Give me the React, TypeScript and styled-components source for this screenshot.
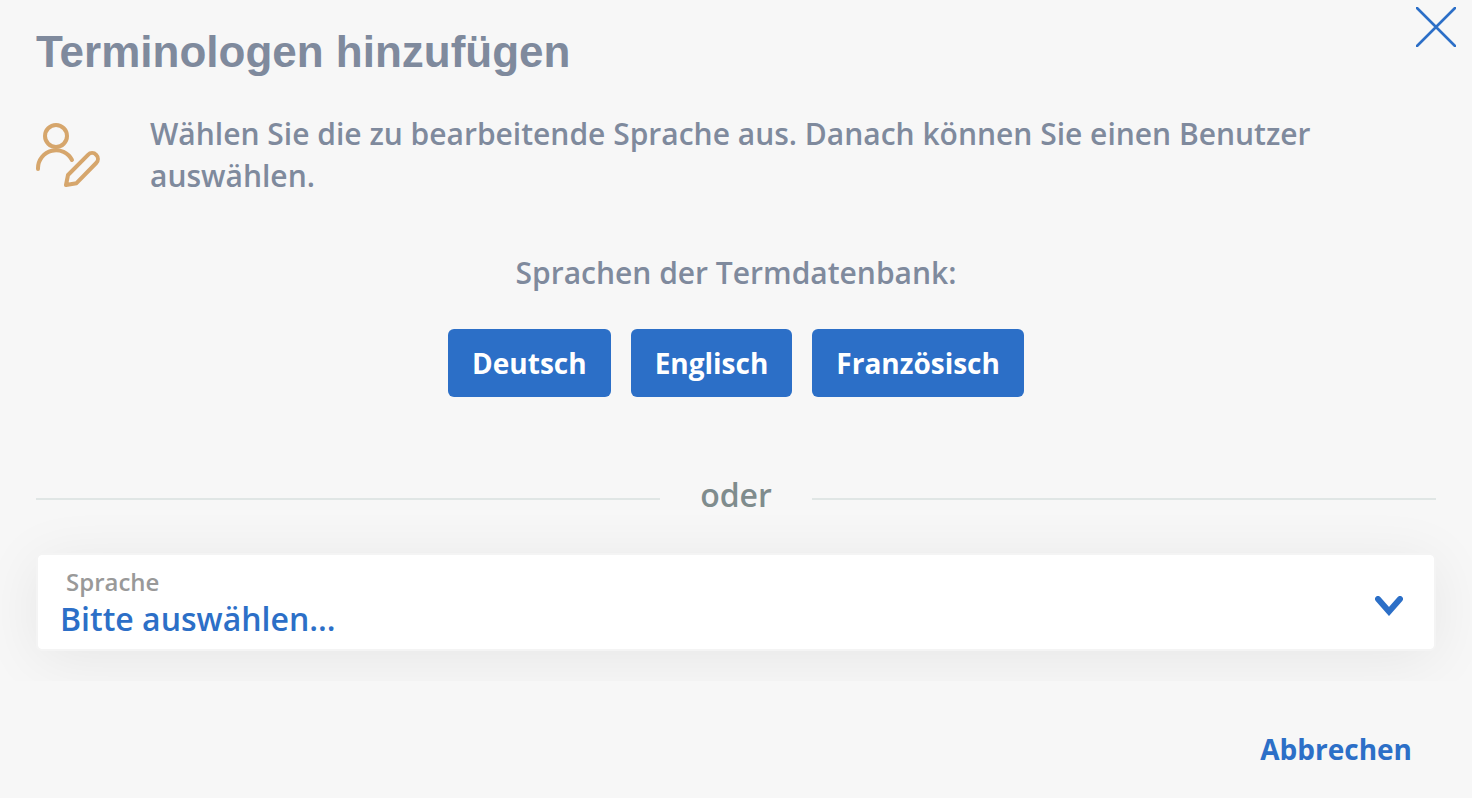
import React from "react";
import styled, { createGlobalStyle } from "styled-components";

const blue = "#2c6fc7";
const slate = "#7f8a9d";
const page = "#f7f7f7";

const GlobalStyle = createGlobalStyle`
  *, *::before, *::after { box-sizing: border-box; }
  body {
    margin: 0;
    background: ${page};
    font-family: "Open Sans", sans-serif;
    color: ${slate};
  }
  button, select { font-family: inherit; cursor: pointer; }
`;

const Dialog = styled.main`
  display: flex;
  flex-direction: column;
`;

const Header = styled.header`
  display: flex;
  justify-content: space-between;
  align-items: flex-start;
  padding: 7px 16px 0 36px;
`;

const Title = styled.h1`
  margin: 20px 0 0;
  font: 700 44px/50px "Liberation Sans", Arial, sans-serif;
`;

const CloseButton = styled.button`
  display: flex;
  padding: 0;
  border: 0;
  background: none;
  color: ${blue};
`;

const Body = styled.div`
  display: flex;
  flex-direction: column;
  padding: 36px 36px 30px;
  overflow: hidden;
`;

const Intro = styled.div`
  display: flex;
  align-items: flex-start;
  gap: 50px;
`;

const IntroIcon = styled.svg`
  flex: none;
  margin-top: 10px;
  color: #d6a66c;
`;

const Text = styled.p`
  margin: 0;
  font-size: 30px;
  line-height: 42px;
  font-weight: 600;
`;

const Languages = styled.section`
  display: flex;
  flex-direction: column;
  align-items: center;
  gap: 35px;
  margin-top: 55px;
`;

const ButtonRow = styled.div`
  display: flex;
  gap: 20px;
`;

const LanguageButton = styled.button`
  height: 68px;
  padding: 0 24px;
  border: 0;
  border-radius: 6px;
  background: ${blue};
  color: #fff;
  font-size: 28px;
  font-weight: 700;
`;

const Divider = styled.div`
  display: flex;
  align-items: center;
  gap: 40px;
  margin-top: 76px;
  color: #7f8c8d;
  font-size: 32px;
  line-height: 44px;
  font-weight: 600;
  &::before, &::after {
    content: "";
    flex: 1;
    height: 2px;
    margin-top: 8px;
    background: #e0e6e5;
  }
`;

const SelectField = styled.div`
  position: relative;
  display: flex;
  flex-direction: column;
  margin-top: 36px;
  padding: 10px 22px 10px;
  border: 2px solid #f4f4f4;
  border-radius: 6px;
  background: #fff;
  background-clip: padding-box;
  box-shadow: 0 8px 60px rgba(0, 0, 0, 0.07);
`;

const FieldLabel = styled.label`
  padding-left: 6px;
  color: #999;
  font-size: 24px;
  line-height: 34px;
  font-weight: 600;
`;

const Select = styled.select`
  width: 100%;
  height: 40px;
  padding: 0;
  border: 0;
  appearance: none;
  background: transparent;
  color: ${blue};
  font-size: 32px;
  line-height: 40px;
  font-weight: 600;
`;

const Chevron = styled.svg`
  position: absolute;
  right: 31px;
  top: 41px;
  color: ${blue};
  pointer-events: none;
`;

const Footer = styled.footer`
  display: flex;
  justify-content: flex-end;
  padding: 48px 60px 27px;
`;

const CancelButton = styled.button`
  padding: 0;
  border: 0;
  background: none;
  color: ${blue};
  font-size: 28px;
  line-height: 40px;
  font-weight: 700;
`;

const languages = ["Deutsch", "Englisch", "Französisch"];

export default function App() {
  return (
    <>
      <GlobalStyle />
      <Dialog>
        <Header>
          <Title>Terminologen hinzufügen</Title>
          <CloseButton type="button" aria-label="Schließen">
            <svg width="40" height="40" viewBox="0 0 40 40" fill="none" stroke="currentColor" strokeWidth="2.6" strokeLinecap="round">
              <path d="M1 1 39 39M39 1 1 39" />
            </svg>
          </CloseButton>
        </Header>
        <Body>
          <Intro>
            <IntroIcon width="64" height="64" viewBox="0 0 64 64" fill="none" stroke="currentColor" strokeWidth="4" strokeLinecap="round" strokeLinejoin="round" aria-hidden="true">
              <circle cx="20" cy="13" r="11" />
              <path d="M2 46v-1a18 18 0 0 1 34-8" />
              <path d="M60.2 31.8a5.8 5.8 0 0 0-8.200 0L32 52 30 62l10.500-1.800L60.200 40a5.800 5.800 0 0 0 0-8.200z" />
            </IntroIcon>
            <Text>
              Wählen Sie die zu bearbeitende Sprache aus. Danach können Sie einen Benutzer auswählen.
            </Text>
          </Intro>
          <Languages>
            <Text>Sprachen der Termdatenbank:</Text>
            <ButtonRow>
              {languages.map((name) => (
                <LanguageButton key={name} type="button">{name}</LanguageButton>
              ))}
            </ButtonRow>
          </Languages>
          <Divider>oder</Divider>
          <SelectField>
            <FieldLabel htmlFor="language">Sprache</FieldLabel>
            <Select id="language" defaultValue="">
              <option value="">Bitte auswählen...</option>
              {languages.map((name) => (
                <option key={name}>{name}</option>
              ))}
            </Select>
            <Chevron width="28" height="20" viewBox="0 0 28 20" fill="none" stroke="currentColor" strokeWidth="6" strokeLinecap="round" aria-hidden="true">
              <path d="M3 3 14 15.500 25 3" />
            </Chevron>
          </SelectField>
        </Body>
        <Footer>
          <CancelButton type="button">Abbrechen</CancelButton>
        </Footer>
      </Dialog>
    </>
  );
}
